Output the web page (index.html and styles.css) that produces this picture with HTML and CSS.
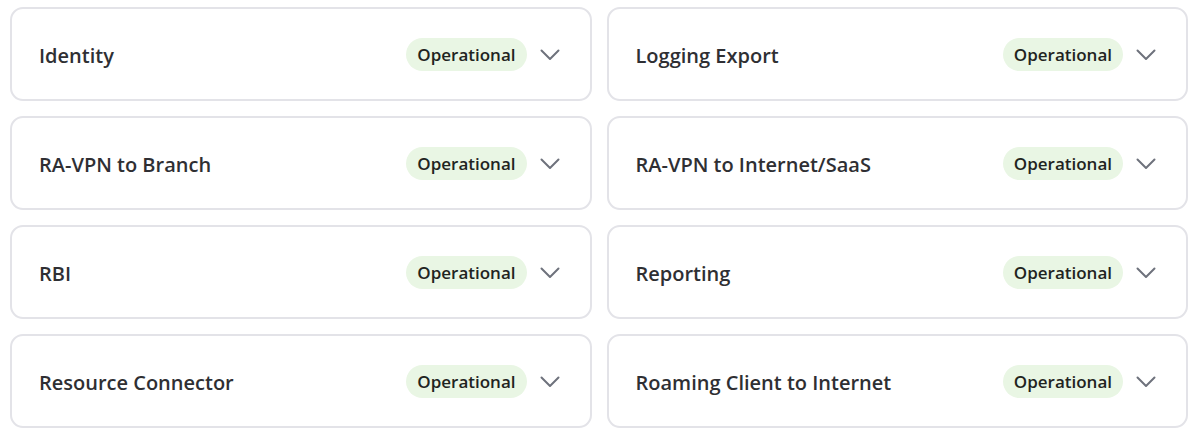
FILE: index.html
```html
<!DOCTYPE html>
<html lang="en">
<head>
    <meta charset="utf-8">
    <title>Service Status</title>
    <link rel="stylesheet" href="styles.css">
</head>
<body>
    <div class="status-grid">
        <div class="service">
            <span class="service-name">Identity</span>
            <span class="badge">Operational</span>
            <svg class="chevron" viewBox="0 0 20 12"><path d="M1.5 1.5 L10 10 L18.5 1.5"/></svg>
        </div>
        <div class="service">
            <span class="service-name">Logging Export</span>
            <span class="badge">Operational</span>
            <svg class="chevron" viewBox="0 0 20 12"><path d="M1.5 1.5 L10 10 L18.5 1.5"/></svg>
        </div>
        <div class="service">
            <span class="service-name">RA-VPN to Branch</span>
            <span class="badge">Operational</span>
            <svg class="chevron" viewBox="0 0 20 12"><path d="M1.5 1.5 L10 10 L18.5 1.5"/></svg>
        </div>
        <div class="service">
            <span class="service-name">RA-VPN to Internet/SaaS</span>
            <span class="badge">Operational</span>
            <svg class="chevron" viewBox="0 0 20 12"><path d="M1.5 1.5 L10 10 L18.5 1.5"/></svg>
        </div>
        <div class="service">
            <span class="service-name">RBI</span>
            <span class="badge">Operational</span>
            <svg class="chevron" viewBox="0 0 20 12"><path d="M1.5 1.5 L10 10 L18.5 1.5"/></svg>
        </div>
        <div class="service">
            <span class="service-name">Reporting</span>
            <span class="badge">Operational</span>
            <svg class="chevron" viewBox="0 0 20 12"><path d="M1.5 1.5 L10 10 L18.5 1.5"/></svg>
        </div>
        <div class="service">
            <span class="service-name">Resource Connector</span>
            <span class="badge">Operational</span>
            <svg class="chevron" viewBox="0 0 20 12"><path d="M1.5 1.5 L10 10 L18.5 1.5"/></svg>
        </div>
        <div class="service">
            <span class="service-name">Roaming Client to Internet</span>
            <span class="badge">Operational</span>
            <svg class="chevron" viewBox="0 0 20 12"><path d="M1.5 1.5 L10 10 L18.5 1.5"/></svg>
        </div>
    </div>
</body>
</html>
```

FILE: styles.css
```css
body {
    margin: 0;
    background: #fff;
    font-family: "Open Sans", Lato, sans-serif;
    color: #2f2f33;
}
.status-grid {
    display: grid;
    grid-template-columns: 1fr 1fr;
    gap: 15px;
    padding: 7px 12px 0 10px;
}
.service {
    display: flex;
    align-items: center;
    height: 94px;
    box-sizing: border-box;
    border: 2px solid #e3e3e8;
    border-radius: 13px;
    padding: 0 30px 0 27px;
}
.service-name {
    flex: 1;
    font-size: 20px;
    font-weight: 600;
    padding-top: 2px;
}
.badge {
    background: #e9f6e4;
    color: #1f2421;
    font-size: 17px;
    font-weight: 600;
    height: 33px;
    line-height: 33px;
    padding: 0 11px;
    border-radius: 17px;
    margin-right: 13px;
}
.chevron {
    width: 20px;
    height: 12px;
    margin-top: 2px;
    fill: none;
    stroke: #6e727c;
    stroke-width: 2;
    stroke-linecap: round;
    stroke-linejoin: round;
}
```
